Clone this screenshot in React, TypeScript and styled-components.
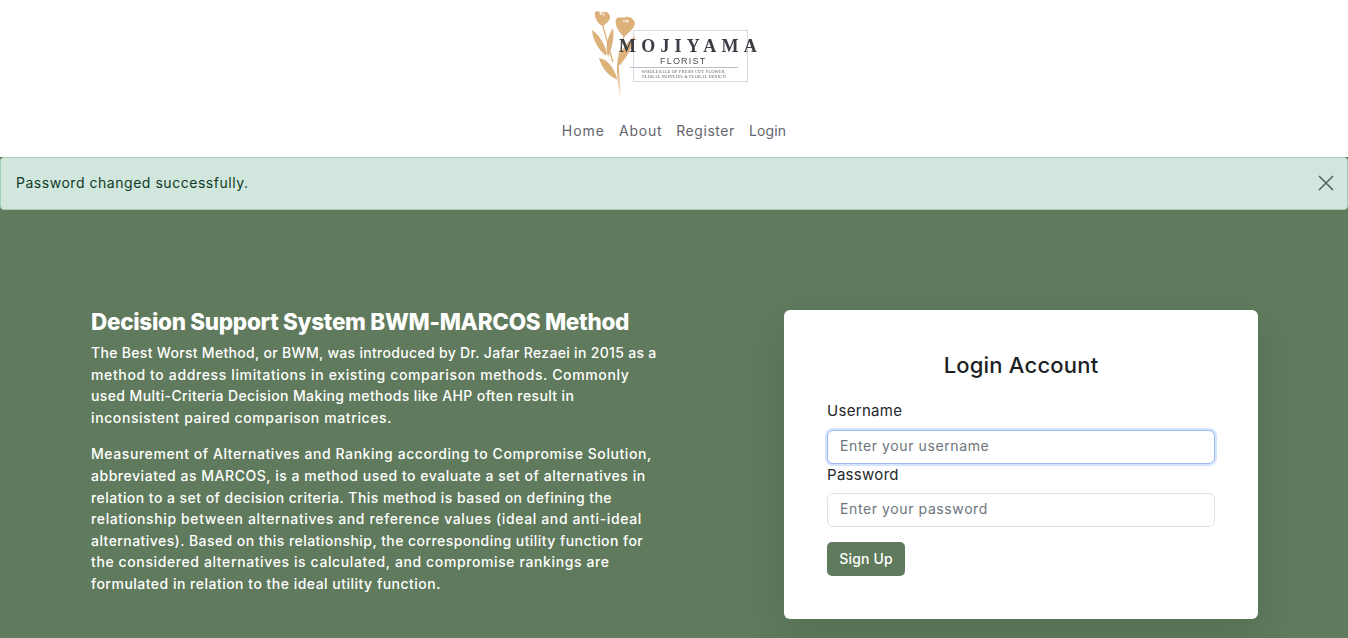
import React from "react";
import styled, { createGlobalStyle } from "styled-components";

const Global = createGlobalStyle`
  html, body { margin: 0; padding: 0; background: #fff; }
  body { font-family: Inter, "Liberation Sans", sans-serif; height: 638px; overflow: hidden; }
  * { box-sizing: border-box; }
`;

const Page = styled.div`
  width: 1348px;
  height: 638px;
  display: flex;
  flex-direction: column;
  overflow: hidden;
  background: #5f7a5c;
`;

const Header = styled.header`
  height: 157px;
  background: #fff;
  display: flex;
  flex-direction: column;
  align-items: center;
`;

const LogoBox = styled.div`
  position: relative;
  width: 190px;
  height: 105px;
  background: #fff;
  flex: none;
  filter: blur(0.35px);
`;

const LogoFrame = styled.div`
  position: absolute;
  left: 54px;
  top: 30px;
  width: 115px;
  height: 52px;
  border: 1px solid #d5d9e2;
`;

const LogoName = styled.div`
  position: absolute;
  left: 40px;
  top: 36px;
  font-family: "Liberation Serif", serif;
  font-weight: 700;
  font-size: 18px;
  line-height: 20px;
  letter-spacing: 5.2px;
  color: #3b3d45;
  white-space: nowrap;
`;

const LogoSub = styled.div`
  position: absolute;
  left: 81px;
  top: 56px;
  font-family: "Liberation Sans", sans-serif;
  font-size: 9px;
  line-height: 10px;
  letter-spacing: 1.2px;
  color: #4a4c54;
  white-space: nowrap;
`;

const LogoRule = styled.div`
  position: absolute;
  left: 51px;
  top: 67px;
  width: 108px;
  height: 1px;
  background: #b9bcc6;
`;

const LogoTag = styled.div`
  position: absolute;
  left: 50px;
  top: 69px;
  width: 110px;
  text-align: center;
  font-family: "Liberation Serif", serif;
  font-size: 4.4px;
  line-height: 5.4px;
  letter-spacing: 0.2px;
  color: #5d5f68;
  white-space: nowrap;
`;

const LogoArt = styled.svg`
  position: absolute;
  left: 0;
  top: 0;
  width: 90px;
  height: 105px;
`;

const Nav = styled.nav`
  display: flex;
  gap: 14px;
  margin-top: 16px;
  font-size: 14px;
  line-height: 20px;
`;

const NavLink = styled.a<{ $spacing: number }>`
  color: #65656c;
  text-decoration: none;
  letter-spacing: ${(p) => p.$spacing}px;
`;

const Alert = styled.div`
  height: 53px;
  flex: none;
  display: flex;
  align-items: center;
  justify-content: space-between;
  padding: 0 13px 2px 15px;
  background: #d1e7dd;
  border: 1px solid #a3cfbb;
  border-radius: 4px;
  color: #0f3a28;
  font-size: 14px;
  letter-spacing: 0.53px;
`;

const CloseIcon = styled.svg`
  width: 16px;
  height: 16px;
  display: block;
`;

const Main = styled.main`
  flex: 1;
  display: flex;
  align-items: flex-start;
  justify-content: space-between;
  padding: 98px 90px 0 91px;
`;

const Intro = styled.section`
  width: 580px;
  color: #fff;
`;

const Title = styled.h1`
  margin: 0 0 7px;
  font-size: 22.5px;
  line-height: 27px;
  font-weight: 800;
  letter-spacing: -0.3px;
  color: #fff;
  white-space: nowrap;
`;

const Para = styled.p`
  margin: 0 0 15px;
  font-size: 14px;
  line-height: 21.6px;
  font-weight: 450;
  color: #fff;
`;

const Line = styled.span<{ $spacing: number }>`
  display: block;
  white-space: nowrap;
  letter-spacing: ${(p) => p.$spacing}px;
`;

const Card = styled.section`
  width: 474px;
  height: 309px;
  margin-top: 2px;
  background: #fff;
  border-radius: 6px;
  padding: 40px 43px 0 43px;
  box-shadow: 0 16px 48px rgba(0, 0, 0, 0.1);
`;

const CardTitle = styled.h2`
  margin: 0 0 20px;
  text-align: center;
  font-size: 22px;
  line-height: 30px;
  font-weight: 500;
  letter-spacing: 0.2px;
  color: #1d1f23;
`;

const Label = styled.label<{ $tight?: boolean }>`
  display: block;
  font-size: 15px;
  line-height: 21px;
  color: #25272b;
  margin: 0 0 ${(p) => (p.$tight ? "8px" : "9px")};
  letter-spacing: 0.3px;
`;

const Input = styled.input<{ $focused?: boolean }>`
  display: block;
  width: 100%;
  height: 34px;
  padding: 0 12px 3px;
  font: inherit;
  font-size: 14px;
  letter-spacing: 0.6px;
  background: #fff;
  color: #212529;
  border-radius: 6px;
  outline: none;
  border: 1px solid ${(p) => (p.$focused ? "#9fb9ec" : "#dee2e6")};
  box-shadow: ${(p) => (p.$focused ? "0 0 0 2px rgba(13, 110, 253, 0.18)" : "none")};
  margin-bottom: ${(p) => (p.$focused ? "0" : "15px")};
  &::placeholder { color: #6c757d; opacity: 1; }
`;

const Button = styled.button`
  display: block;
  width: 78px;
  height: 34px;
  padding: 0 0 2px;
  border: 0;
  border-radius: 5px;
  background: #5f7a5c;
  color: #fff;
  font: inherit;
  font-size: 14px;
  font-weight: 500;
  letter-spacing: 0.15px;
`;

const Flower = "#dcb27a";

function Art() {
  return (
    <LogoArt viewBox="0 0 90 105">
      <defs>
        <linearGradient id="stemFade" x1="0" y1="0" x2="0" y2="1">
          <stop offset="0" stopColor={Flower} />
          <stop offset="0.55" stopColor={Flower} />
          <stop offset="1" stopColor={Flower} stopOpacity="0.25" />
        </linearGradient>
      </defs>
      <g fill={Flower}>
        <path d="M16 12 C18 10 22 13 24 12 C27 11 31 13 31 17 C31 21 27 24 23.5 26 C19 24 15 18 16 12Z" />
        <path d="M37 19 C40 15 44 19 47 17 C51 16 56 20 56 24 C55 29 49 33 45 37 C41 33 35 26 37 19Z" />
        <path d="M13 30 C19 34 25 42 27.5 52 C28 55 27 56 26 55 C19 49 14 40 13 30Z" />
        <path d="M34 28 C35.5 36 33.5 47 29 57 C26 48 28 37 34 28Z" />
        <path d="M20 58 C28 59 35 67 38.5 80 C30 76 23 69 20 58Z" />
        <path d="M56 36 C55 44 50 54 41 65 C38.5 67 39 60 41 55 C44 47 50 41 56 36Z" />
        <path d="M23 25 L24.3 25 L34.5 62 L33 62Z" />
      </g>
      <path
        d="M44.5 36 L45.7 36 C42 50 39.5 60 40 70 C41 80 41.5 90 41.5 97 L40.3 97 C40 86 38 78 38 68 C38 58 42 46 44.5 36Z"
        fill="url(#stemFade)"
      />
      <g fill="#fff" opacity="0.75">
        <circle cx="22" cy="13.5" r="1.4" />
        <circle cx="25" cy="14.5" r="1" />
        <circle cx="48" cy="21" r="1.6" />
        <circle cx="45" cy="21" r="1" />
      </g>
    </LogoArt>
  );
}

export default function App() {
  return (
    <Page>
      <Global />
      <Header>
        <LogoBox>
          <LogoFrame />
          <Art />
          <LogoName>MOJIYAMA</LogoName>
          <LogoSub>FLORIST</LogoSub>
          <LogoRule />
          <LogoTag>
            WHOLESALE OF FRESH CUT FLOWER,
            <br />
            FLORAL SUPPLIES &amp; FLORAL DESIGN
          </LogoTag>
        </LogoBox>
        <Nav>
          <NavLink href="#" $spacing={1}>Home</NavLink>
          <NavLink href="#" $spacing={0.75}>About</NavLink>
          <NavLink href="#" $spacing={0.55}>Register</NavLink>
          <NavLink href="#" $spacing={0.15}>Login</NavLink>
        </Nav>
      </Header>
      <Alert>
        <span>Password changed successfully.</span>
        <CloseIcon viewBox="0 0 16 16" aria-label="Close">
          <path d="M1 1 L15 15 M15 1 L1 15" stroke="#4d6259" strokeWidth="1.5" fill="none" />
        </CloseIcon>
      </Alert>
      <Main>
        <Intro>
          <Title>Decision Support System BWM-MARCOS Method</Title>
          <Para>
            <Line $spacing={0.31}>The Best Worst Method, or BWM, was introduced by Dr. Jafar Rezaei in 2015 as a</Line>
            <Line $spacing={0.63}>method to address limitations in existing comparison methods. Commonly</Line>
            <Line $spacing={0.38}>used Multi-Criteria Decision Making methods like AHP often result in</Line>
            <Line $spacing={0.61}>inconsistent paired comparison matrices.</Line>
          </Para>
          <Para>
            <Line $spacing={0.57}>Measurement of Alternatives and Ranking according to Compromise Solution,</Line>
            <Line $spacing={0.53}>abbreviated as MARCOS, is a method used to evaluate a set of alternatives in</Line>
            <Line $spacing={0.455}>relation to a set of decision criteria. This method is based on defining the</Line>
            <Line $spacing={0.63}>relationship between alternatives and reference values (ideal and anti-ideal</Line>
            <Line $spacing={0.44}>alternatives). Based on this relationship, the corresponding utility function for</Line>
            <Line $spacing={0.61}>the considered alternatives is calculated, and compromise rankings are</Line>
            <Line $spacing={0.49}>formulated in relation to the ideal utility function.</Line>
          </Para>
        </Intro>
        <Card>
          <CardTitle>Login Account</CardTitle>
          <Label htmlFor="u">Username</Label>
          <Input id="u" $focused placeholder="Enter your username" />
          <Label htmlFor="p" $tight>Password</Label>
          <Input id="p" type="password" placeholder="Enter your password" />
          <Button type="button">Sign Up</Button>
        </Card>
      </Main>
    </Page>
  );
}
